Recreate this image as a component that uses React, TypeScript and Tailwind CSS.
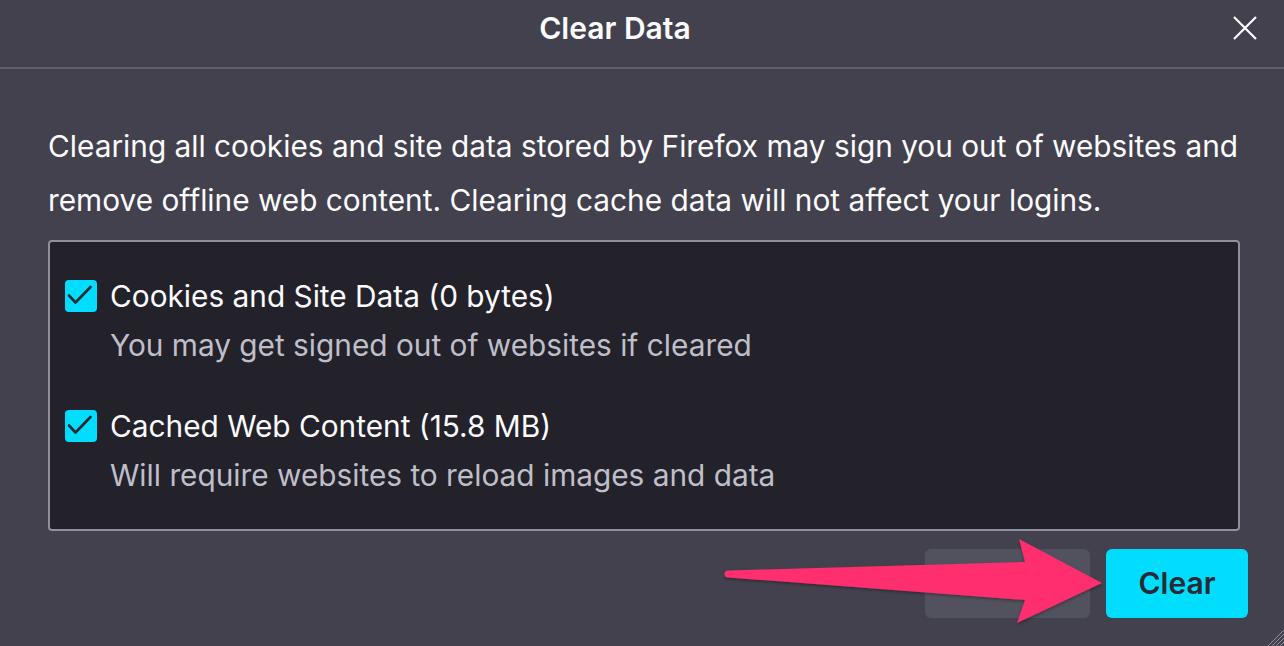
import React from "react"

const font = { fontFamily: "Inter, 'Noto Sans', sans-serif" }

function Check() {
  return (
    <span className="flex h-[32px] w-[32px] shrink-0 items-center justify-center rounded-[4px] bg-[#00ddff]">
      <svg width="32" height="32" viewBox="0 0 32 32" fill="none">
        <path d="M4 15.5 L10.5 22.5 L25.5 7" stroke="#2b2a33" strokeWidth="2.6" strokeLinecap="round" strokeLinejoin="round" />
      </svg>
    </span>
  )
}

function Option({ label, hint }: { label: string; hint: string }) {
  return (
    <div className="flex flex-col">
      <div className="flex h-[36px] items-center gap-[13px]">
        <Check />
        <span className="text-[29.8px] text-[#fbfbfe]">{label}</span>
      </div>
      <div className="mt-[13px] h-[36px] pl-[45px] text-[29.8px] leading-[36px] text-[#bfbfc9]">{hint}</div>
    </div>
  )
}

export default function App() {
  return (
    <div className="relative h-[646px] w-[1284px] overflow-hidden bg-[#42414d]" style={font}>
      <header className="flex h-[67px] items-start">
        <h1 className="flex-1 pt-[9px] text-center text-[30px] font-semibold leading-[38px] text-[#fbfbfe]">
          Clear Data
        </h1>
        <button className="mr-[24px] mt-[13px] p-[2px]">
          <svg width="26" height="26" viewBox="0 0 26 26" fill="none">
            <path d="M2 2 L24 24 M24 2 L2 24" stroke="#fbfbfe" strokeWidth="2.2" />
          </svg>
        </button>
      </header>
      <div className="h-[2px] bg-[#605f6b]" />

      <div className="pl-[48px] pr-[36px] pt-[50px]">
        <p className="text-[29.8px] leading-[54px] text-[#fbfbfe]">
          Clearing all cookies and site data stored by Firefox may sign you out of websites and remove offline web
          content. Clearing cache data will not affect your logins.
        </p>

        <div className="mr-[8px] mt-[13px] flex h-[291px] flex-col gap-[45px] rounded-[4px] border-2 border-[#8f8f9d] bg-[#23222b] pl-[15px] pt-[36px]">
          <Option label="Cookies and Site Data (0 bytes)" hint="You may get signed out of websites if cleared" />
          <Option label="Cached Web Content (15.8 MB)" hint="Will require websites to reload images and data" />
        </div>
      </div>

      <div className="mt-[18px] flex justify-end gap-[16px] pr-[36px]">
        <button className="h-[69px] w-[165px] rounded-[6px] bg-[#52515e] text-[30px] font-semibold text-[#fbfbfe]">
          Cancel
        </button>
        <button className="h-[69px] w-[142px] rounded-[6px] bg-[#00ddff] text-[30px] font-semibold text-[#2b2a33]">
          Clear
        </button>
      </div>

      {/* annotation arrow */}
      <svg className="pointer-events-none absolute left-0 top-0" width="1284" height="646" viewBox="0 0 1284 646">
        <defs>
          <filter id="sh" x="-10%" y="-50%" width="120%" height="200%">
            <feDropShadow dx="0" dy="1.5" stdDeviation="1.5" floodColor="#000" floodOpacity="0.35" />
          </filter>
        </defs>
        <path
          d="M728 570.5 L1025 562 L1019 539 L1102 583 L1017 623 L1025 600 L728 577.5 A3.5 3.5 0 0 1 728 570.5 Z"
          fill="#ff2d6e"
          filter="url(#sh)"
        />
      </svg>

      {/* resize grip */}
      <svg className="absolute bottom-0 right-0" width="22" height="22" viewBox="0 0 22 22">
        <path d="M22 6 L6 22 M22 10 L10 22 M22 14 L14 22 M22 18 L18 22" stroke="#8f8f9d" strokeWidth="1" />
      </svg>
    </div>
  )
}
